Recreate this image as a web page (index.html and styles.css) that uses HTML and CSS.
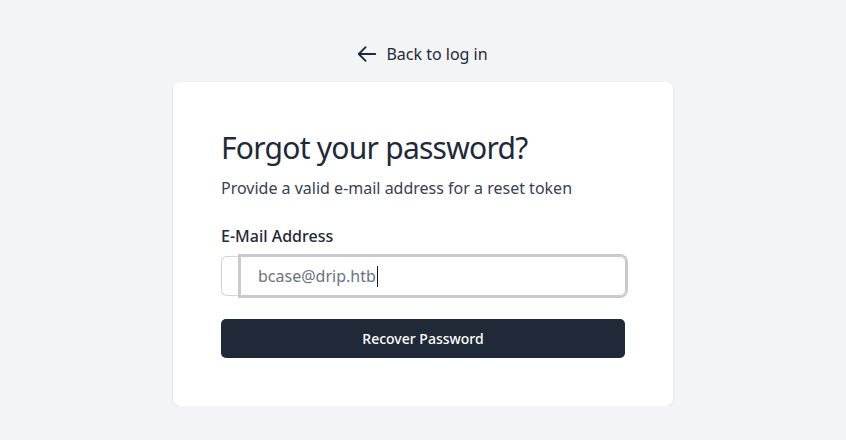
FILE: index.html
```html
<!DOCTYPE html>
<html lang="en">
<head>
<meta charset="utf-8">
<title>Forgot your password?</title>
<link rel="stylesheet" href="styles.css">
</head>
<body>
<main class="page">
  <a class="back" href="#">
    <svg class="back-icon" viewBox="0 0 24 24" fill="none" stroke="currentColor" stroke-width="2" stroke-linecap="round" stroke-linejoin="round"><path d="M10.5 19.5 3 12m0 0 7.5-7.5M3 12h18"/></svg>
    <span>Back to log in</span>
  </a>
  <section class="card">
    <h1 class="title">Forgot your password?</h1>
    <p class="subtitle">Provide a valid e-mail address for a reset token</p>
    <label class="label">E-Mail Address</label>
    <div class="group">
      <span class="prefix"></span>
      <div class="field">bcase@drip.htb<span class="caret"></span></div>
    </div>
    <button class="btn" type="button">Recover Password</button>
  </section>
</main>
</body>
</html>
```

FILE: styles.css
```css
* { box-sizing: border-box; }
html, body { margin: 0; padding: 0; }
body {
  background: #f3f4f6;
  font-family: "Noto Sans", "Open Sans", sans-serif;
  color: #1f2937;
}
.page {
  display: flex;
  flex-direction: column;
  align-items: center;
  padding-top: 42px;
}
.back {
  display: flex;
  align-items: center;
  gap: 8px;
  height: 24px;
  font-size: 16px;
  line-height: 24px;
  color: #1f2937;
  text-decoration: none;
  margin-bottom: 16px;
  margin-left: -2px;
}
.back-icon { width: 22px; height: 22px; display: block; }
.card {
  width: 500px;
  background: #fff;
  border-radius: 7px;
  box-shadow: 0 1px 3px rgba(0,0,0,0.08), 0 1px 2px rgba(0,0,0,0.04);
  padding: 48px 48px 48px 48px;
}
.title {
  margin: 0;
  font-size: 30px;
  line-height: 36px;
  font-weight: 400;
  letter-spacing: -0.025em;
  color: #1f2937;
}
.subtitle {
  margin: 10px 0 0;
  font-size: 16px;
  line-height: 24px;
  color: #374151;
}
.label {
  display: block;
  margin-top: 24px;
  font-size: 16px;
  line-height: 24px;
  font-weight: 500;
  color: #1f2937;
}
.group {
  display: flex;
  margin-top: 8px;
  height: 40px;
  margin-right: -1px;
}
.prefix {
  width: 19px;
  border: 1px solid #d1d5db;
  border-right: none;
  border-radius: 6px 0 0 6px;
}
.field {
  flex: 1;
  display: flex;
  align-items: center;
  border: 1px solid #c9cad0;
  border-radius: 0 6px 6px 0;
  box-shadow: 0 0 0 2px #c9cad0;
  padding-left: 17px;
  font-size: 16px;
  color: #6b7280;
}
.caret {
  display: inline-block;
  width: 1px;
  height: 21px;
  background: #111827;
  margin-left: 1px;
}
.btn {
  display: block;
  width: 100%;
  margin-top: 23px;
  height: 39px;
  border: none;
  border-radius: 5px;
  background: #1f2937;
  color: #fff;
  font-family: "Noto Sans", "Open Sans", sans-serif;
  font-size: 14px;
  font-weight: 500;
}
```
